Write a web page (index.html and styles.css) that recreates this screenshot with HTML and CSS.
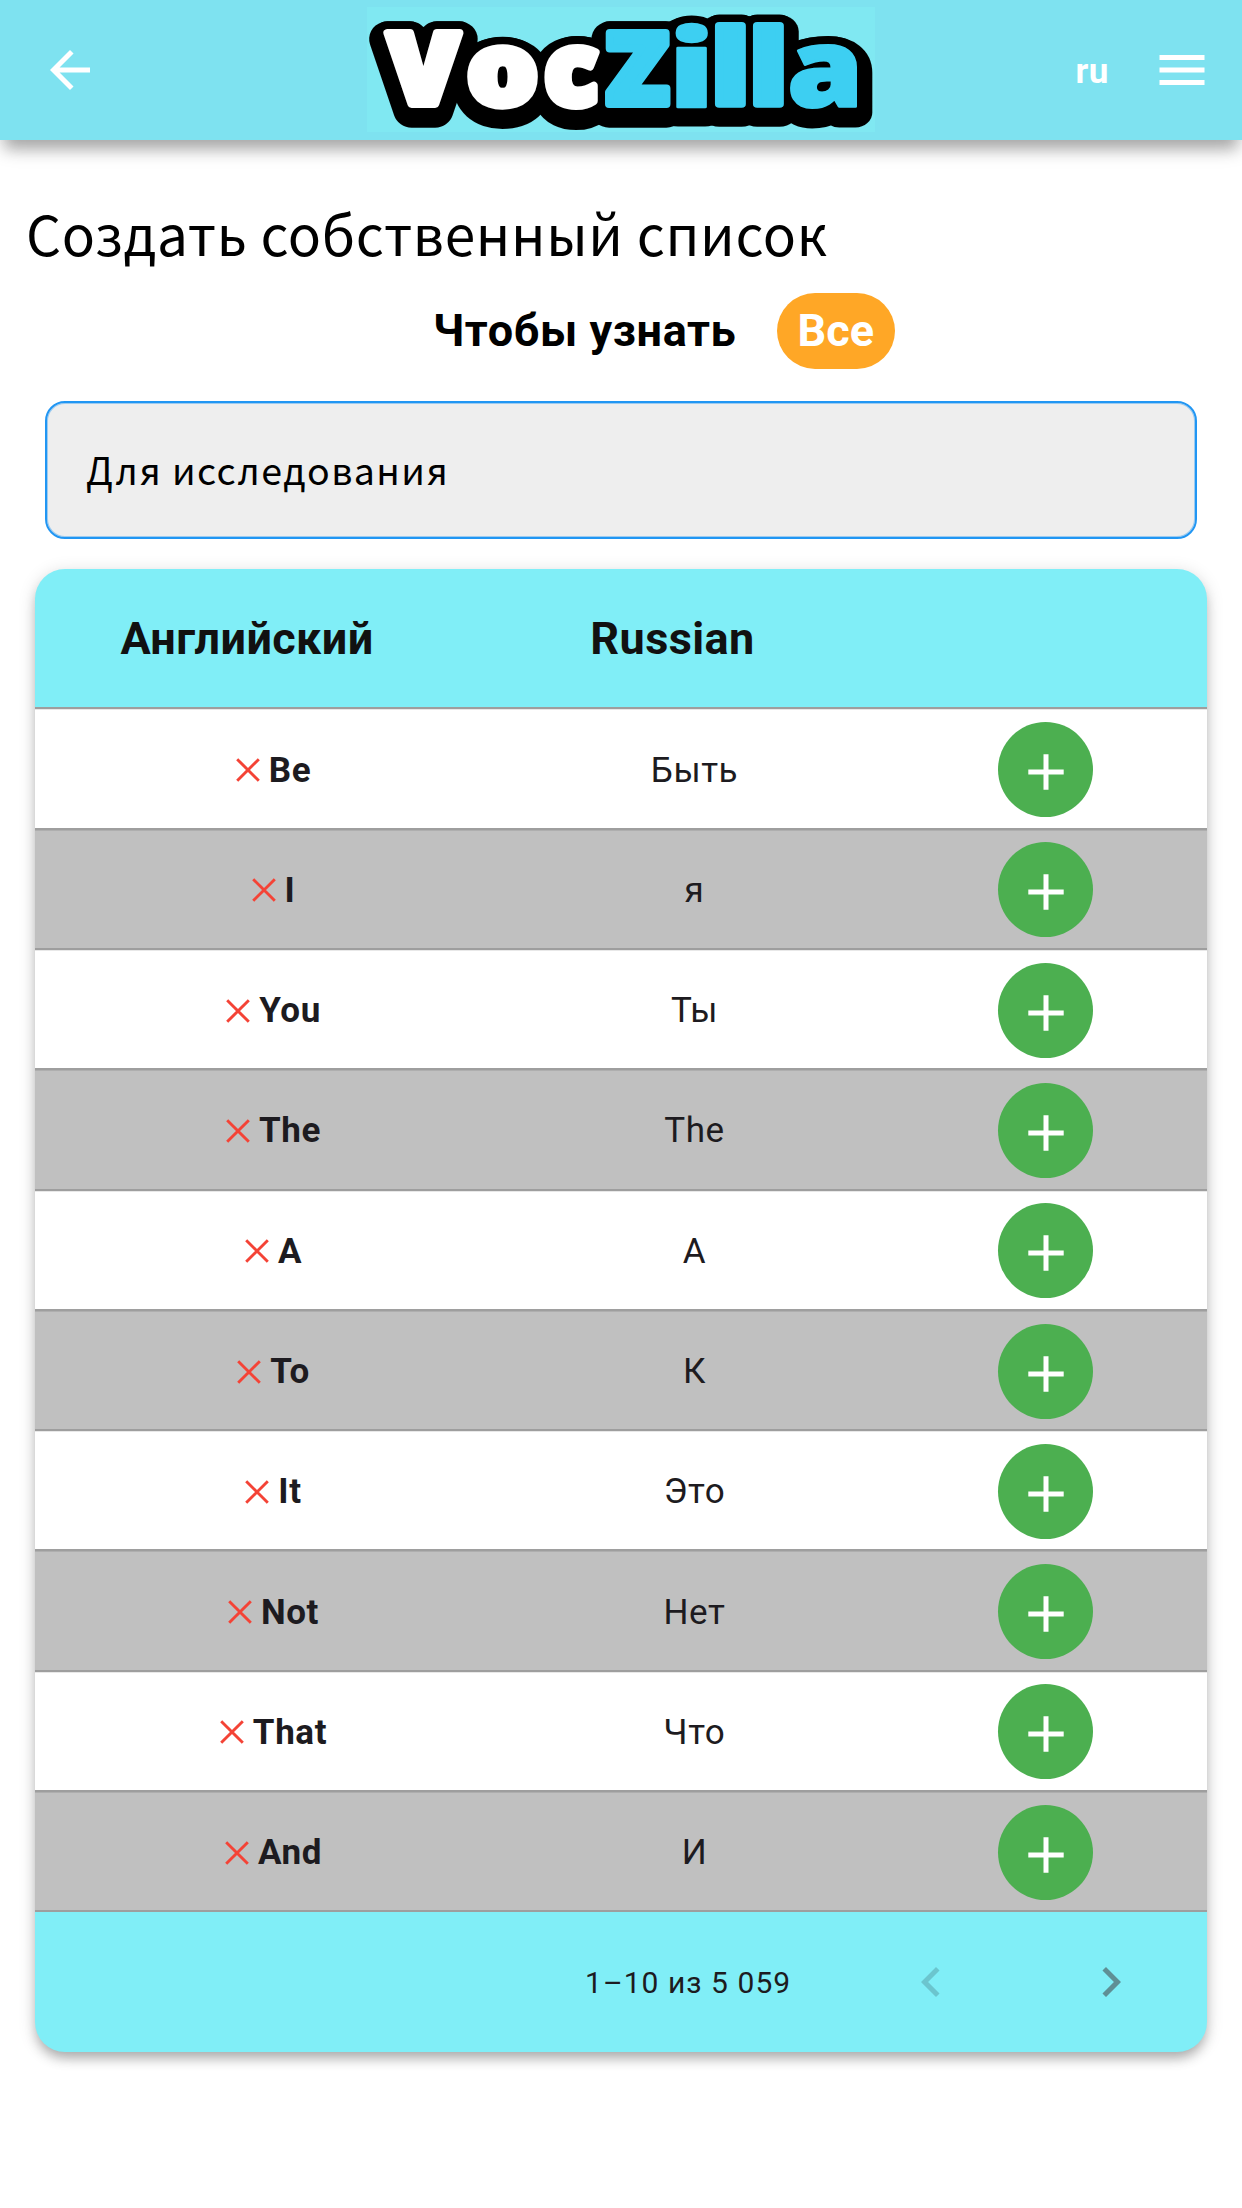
FILE: index.html
```html
<!DOCTYPE html>
<html lang="ru">
<head>
<meta charset="utf-8">
<title>VocZilla</title>
<link rel="stylesheet" href="styles.css">
</head>
<body>
<svg class="defs" width="0" height="0">
  <symbol id="cross" viewBox="0 0 24 24"><path d="M1.2 1.2 22.8 22.8M22.8 1.2 1.2 22.8" fill="none" stroke="#f44336" stroke-width="2.9"/></symbol>
  <symbol id="plus" viewBox="0 0 36 36"><path d="M18 .3V35.7M.3 18H35.7" fill="none" stroke="#fff" stroke-width="5"/></symbol>
</svg>
<header class="appbar">
  <svg class="back" viewBox="0 0 24 24"><path fill="#fff" d="M20 11H7.83l5.59-5.59L12 4l-8 8 8 8 1.41-1.41L7.83 13H20v-2z"/></svg>
  <svg class="logo" viewBox="367 7 508 125" role="img" aria-label="VocZilla">
    <defs>
      <g id="word">
        <text transform="translate(423.5 104) scale(1.035 .993)">V</text>
        <text transform="translate(502.5 105) scale(1.125 1.01)">o</text>
        <text transform="translate(571.2 105) scale(1 1.01)">c</text>
        <g class="zilla">
          <text transform="translate(637.5 104) scale(1.03 .993)">Z</text>
          <text class="thin" transform="translate(691.7 106.5) scale(1.42 1.064)">i</text>
          <text transform="translate(730.3 104) scale(1.17 1.02)">l</text>
          <text transform="translate(768.3 104) scale(1.17 1.02)">l</text>
          <text class="thin" transform="translate(825.3 107.3) scale(1.22 1.085)">a</text>
        </g>
      </g>
    </defs>
    <use class="logo-outline" href="#word" transform="translate(0 6)"/>
    <use class="logo-gap" href="#word"/>
    <use class="logo-face" href="#word"/>
  </svg>
  <div class="actions">
    <span class="lang">ru</span>
    <svg class="menu" viewBox="0 0 24 24"><path fill="#fff" d="M3 18h18v-2H3v2zm0-5h18v-2H3v2zm0-7v2h18V6H3z"/></svg>
  </div>
</header>
<main>
  <h1 class="title">Создать собственный список</h1>
  <div class="filter"><span class="filter-label">Чтобы узнать</span><span class="pill">Все</span></div>
  <div class="search">Для исследования</div>
  <section class="card">
    <div class="head"><span class="h-en">Английский</span><span class="h-ru">Russian</span></div>
    <div class="row"><div class="en"><svg class="x"><use href="#cross"/></svg>Be</div><div class="ru">Быть</div><div class="add"><span class="btn"><svg><use href="#plus"/></svg></span></div></div>
    <div class="row"><div class="en"><svg class="x"><use href="#cross"/></svg>I</div><div class="ru">я</div><div class="add"><span class="btn"><svg><use href="#plus"/></svg></span></div></div>
    <div class="row"><div class="en"><svg class="x"><use href="#cross"/></svg>You</div><div class="ru">Ты</div><div class="add"><span class="btn"><svg><use href="#plus"/></svg></span></div></div>
    <div class="row"><div class="en"><svg class="x"><use href="#cross"/></svg>The</div><div class="ru">The</div><div class="add"><span class="btn"><svg><use href="#plus"/></svg></span></div></div>
    <div class="row"><div class="en"><svg class="x"><use href="#cross"/></svg>A</div><div class="ru">А</div><div class="add"><span class="btn"><svg><use href="#plus"/></svg></span></div></div>
    <div class="row"><div class="en"><svg class="x"><use href="#cross"/></svg>To</div><div class="ru">К</div><div class="add"><span class="btn"><svg><use href="#plus"/></svg></span></div></div>
    <div class="row"><div class="en"><svg class="x"><use href="#cross"/></svg>It</div><div class="ru">Это</div><div class="add"><span class="btn"><svg><use href="#plus"/></svg></span></div></div>
    <div class="row"><div class="en"><svg class="x"><use href="#cross"/></svg>Not</div><div class="ru">Нет</div><div class="add"><span class="btn"><svg><use href="#plus"/></svg></span></div></div>
    <div class="row"><div class="en"><svg class="x"><use href="#cross"/></svg>That</div><div class="ru">Что</div><div class="add"><span class="btn"><svg><use href="#plus"/></svg></span></div></div>
    <div class="row"><div class="en"><svg class="x"><use href="#cross"/></svg>And</div><div class="ru">И</div><div class="add"><span class="btn"><svg><use href="#plus"/></svg></span></div></div>
    <div class="foot">
      <span class="range">1–10 из 5 059</span>
      <svg class="prev" viewBox="0 0 24 24"><path d="M15.41 7.41 14 6l-6 6 6 6 1.41-1.41L10.83 12z"/></svg>
      <svg class="next" viewBox="0 0 24 24"><path d="M10 6 8.59 7.41 13.17 12l-4.58 4.59L10 18l6-6z"/></svg>
    </div>
  </section>
</main>
</body>
</html>
```
FILE: styles.css
```css
* { box-sizing: border-box; }
body { margin: 0; height: 2208px; background: #fff; font-family: Roboto, sans-serif; color: #1d1b20; overflow: hidden; }
svg { display: block; }
.defs { position: absolute; }

.appbar { display: grid; grid-template-columns: 367px 508px 1fr; align-items: center; height: 140px; background: #7ee2f0; box-shadow: 0 14px 14px -5px rgba(0,0,0,.28), 0 5px 24px rgba(0,0,0,.13); }
.back { width: 60px; height: 60px; margin-left: 40px; }
.logo { width: 508px; height: 125px; align-self: start; margin-top: 7px; background: #80e8f2; overflow: visible; }
.logo text { font-family: "Noto Sans", sans-serif; font-weight: 900; font-size: 100px; text-anchor: middle; stroke-linejoin: round; vector-effect: non-scaling-stroke; stroke-width: var(--w); }
.logo .thin { stroke-width: var(--thin); }
.logo-face { --w: 8px; --thin: 3px; --zilla: #3dcff2; fill: #fff; stroke: #fff; }
.logo-gap { --w: 24px; --thin: 20px; --zilla: #000; fill: #000; stroke: #000; }
.logo-outline { --w: 36px; --thin: 32px; --zilla: #000; fill: #000; stroke: #000; }
.zilla { fill: var(--zilla); stroke: var(--zilla); }
.actions { display: flex; align-items: center; justify-content: flex-end; padding-right: 30px; }
.lang { font-weight: 700; font-size: 35px; letter-spacing: .6px; color: #fff; margin: 2px 43px 0 0; }
.menu { width: 60px; height: 60px; }

.title { margin: 47px 0 0 26px; font: 400 55px/90px "Noto Sans CJK JP", sans-serif; letter-spacing: .65px; color: #000; white-space: nowrap; }
.filter { display: flex; align-items: center; height: 76px; margin: 15.5px 0 0 433px; font-weight: 700; font-size: 45px; white-space: nowrap; }
.filter-label { width: 343.5px; letter-spacing: .6px; color: #000; }
.pill { width: 118.5px; height: 76px; line-height: 75px; border-radius: 38px; background: #ffa726; color: #fff; text-align: center; }
.search { width: 1152px; height: 138px; margin: 32px 0 0 45px; padding-left: 39px; border: 2px solid #2196f3; border-radius: 20px; background: #eee; box-shadow: inset 0 0 0 1px rgba(33,150,243,.4); font: 400 37.5px/132px "Noto Sans CJK JP", sans-serif; letter-spacing: 1.38px; color: #000; }

.card { width: 1172px; height: 1483px; margin: 30.5px 0 0 35px; border-radius: 30px; background: #80eef7; box-shadow: 0 8px 12px -2px rgba(0,0,0,.26), 0 3px 18px rgba(0,0,0,.14); overflow: hidden; }
.head { display: grid; grid-template-columns: 424px 427px; height: 138.4px; line-height: 139px; text-align: center; font-weight: 700; font-size: 45px; letter-spacing: .4px; color: #111; }
.row { display: grid; grid-template-columns: 476px 366px 330px; align-items: center; height: 120.3px; padding-top: 2px; border-top: 2px solid #9e9e9e; box-shadow: inset 0 1px rgba(0,0,0,.09); background: #fff; font-size: 35px; letter-spacing: .6px; text-align: center; }
.row:nth-child(odd) { background-color: #c0c0c0; }
.en { display: flex; align-items: center; justify-content: center; gap: 9px; padding: 1px 0 0 1px; font-weight: 700; }
.ru { padding: 1px 0 0 1px; }
.x { width: 24px; height: 24px; }
.add { padding-left: 7px; }
.btn { display: flex; align-items: center; justify-content: center; width: 95px; height: 95px; margin: 0 auto; padding-top: 5px; border-radius: 50%; background: #4caf50; }
.btn svg { width: 36px; height: 36px; }
.foot { display: flex; align-items: center; height: 142px; border-top: 2px solid #9e9e9e; padding: 0 0 0 550px; }
.range { width: 316px; font-size: 30px; letter-spacing: 1.05px; }
.foot svg { width: 60px; height: 60px; }
.prev { fill: #6bc5ce; margin-right: 119.5px; }
.next { fill: #5f8f95; }
```
